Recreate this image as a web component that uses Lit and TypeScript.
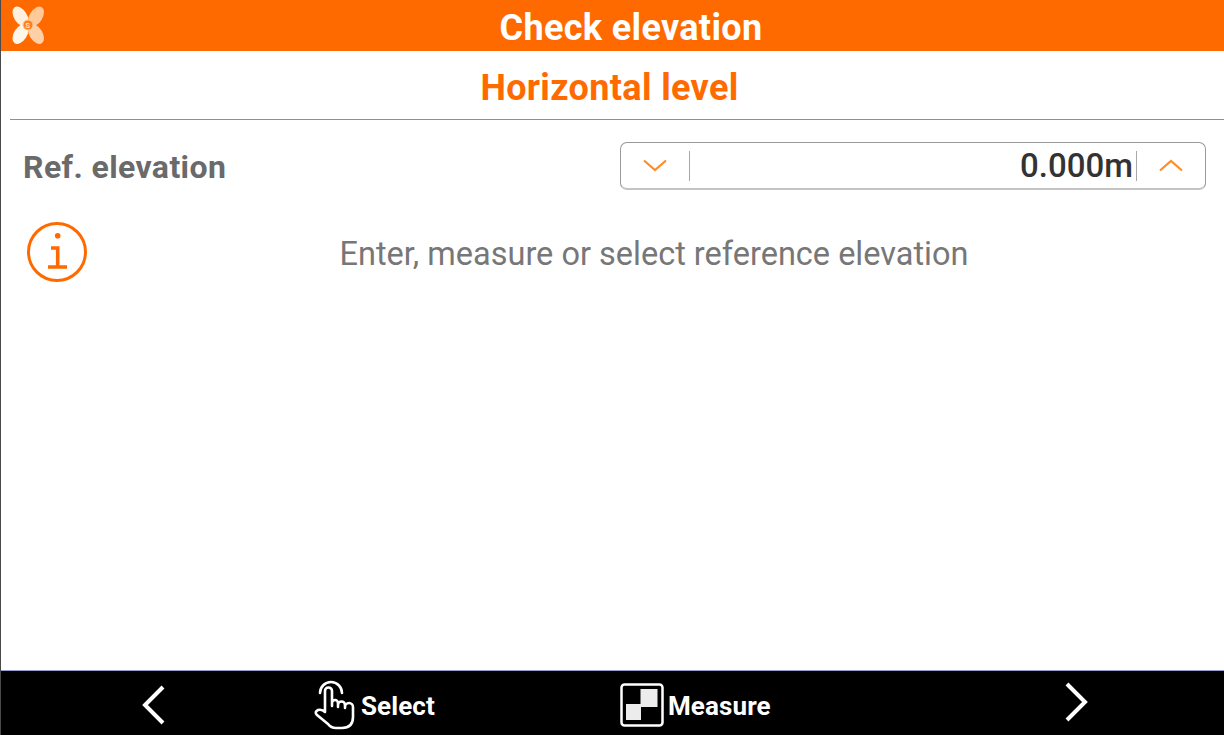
import { LitElement, html, css } from "lit";
import { customElement } from "lit/decorators.js";

@customElement("app-root")
export class AppRoot extends LitElement {
  static styles = css`
    :host { display: block; width: 1224px; height: 735px; font-family: Roboto, "Liberation Sans", sans-serif; overflow: hidden; }
    .page { height: 735px; display: flex; flex-direction: column; background: #fff; border-left: 1px solid #4a4a4a; box-sizing: border-box; }
    .top { height: 51px; flex: none; background: #ff6a00; display: flex; align-items: center; justify-content: center; position: relative; color: #fff; font-size: 36px; font-weight: 700; letter-spacing: 0.35px; }
    .top span { padding: 5px 0 0 37px; }
    .logo { position: absolute; left: 8px; top: 6px; width: 36px; height: 38px; }
    .logo text { font-family: Roboto, sans-serif; font-size: 8px; font-weight: 700; fill: #ffe0c0; text-anchor: middle; }
    .sub { height: 69px; flex: none; margin: 0 0 0 9px; padding: 5px 15px 0 0; display: flex; align-items: center; justify-content: center; color: #ff6a00; font-size: 36px; font-weight: 700; letter-spacing: 0.35px; border-bottom: 1px solid #e8772a; box-sizing: border-box; }
    .row { display: flex; align-items: center; justify-content: space-between; height: 48px; margin-top: 22px; padding: 0 18px 0 22px; }
    .label { font-size: 32px; font-weight: 700; color: #6a6a6a; letter-spacing: 0.4px; padding-top: 2px; }
    .field { width: 586px; height: 48px; box-sizing: border-box; border: 1px solid #999; border-bottom: 2px solid #c4c4c4; border-radius: 7px; display: flex; align-items: center; }
    .chev { width: 68px; flex: none; display: flex; justify-content: center; }
    .sep { width: 1px; height: 30px; background: #a8a8a8; flex: none; }
    .val { flex: 1; text-align: right; font-size: 33px; font-weight: 500; color: #333; line-height: 1; padding-right: 3px; }
    .info { display: flex; align-items: center; height: 66px; margin-top: 29px; padding-left: 25px; }
    .msg { flex: 1; text-align: center; font-size: 32.5px; color: #777; padding: 4px 4px 0 0; }
    .spacer { flex: 1; }
    .bottom { height: 60px; padding-top: 4px; flex: none; background: #000; border-top: 1px solid #9a9ad0; color: #fff; font-size: 26px; font-weight: 700; letter-spacing: 0.1px; display: grid; grid-template-columns: 313px 306px 1fr 160px; align-items: center; }
    .btn { display: flex; align-items: center; gap: 1px; }
    .btn span { padding-top: 2px; }
    .btn.m { gap: 4px; }
    .c { display: flex; justify-content: flex-end; padding-right: 148px; }
  `;
  render() {
    return html`<div class="page">
      <div class="top">
        <svg class="logo" viewBox="0 0 36 38">
          <ellipse cx="11.5" cy="10.5" rx="6.5" ry="11" transform="rotate(-32 11.5 10.5)" fill="#fff0de" />
          <ellipse cx="27" cy="10.5" rx="6.5" ry="11" transform="rotate(32 27 10.5)" fill="#ffc998" />
          <ellipse cx="11.5" cy="28" rx="6.5" ry="11" transform="rotate(32 11.5 28)" fill="#fff5e8" />
          <ellipse cx="27" cy="28" rx="6.5" ry="11" transform="rotate(-32 27 28)" fill="#ffd0a8" />
          <circle cx="19" cy="19" r="5" fill="#ff7d1a" stroke="#ffc998" />
          <text x="19" y="22">S</text>
        </svg>
        <span>Check elevation</span>
      </div>
      <div class="sub"><span>Horizontal level</span></div>
      <div class="row">
        <div class="label">Ref. elevation</div>
        <div class="field">
          <div class="chev"><svg width="24" height="13" viewBox="0 0 24 13"><path d="M1 1.5 L12 11 L23 1.5" fill="none" stroke="#ff8c26" stroke-width="2.2"/></svg></div>
          <div class="sep"></div>
          <div class="val">0.000m</div>
          <div class="sep"></div>
          <div class="chev"><svg width="24" height="13" viewBox="0 0 24 13"><path d="M1 11.5 L12 2 L23 11.5" fill="none" stroke="#ff8c26" stroke-width="2.2"/></svg></div>
        </div>
      </div>
      <div class="info">
        <svg width="62" height="62" viewBox="0 0 62 62">
          <circle cx="31" cy="31" r="28.5" fill="none" stroke="#ff6a00" stroke-width="3" />
          <circle cx="31.7" cy="14.7" r="2.8" fill="#ff6a00" />
          <path d="M25 27 H31.7 V46 M22 46 H41" fill="none" stroke="#ff6a00" stroke-width="3.6" />
        </svg>
        <div class="msg">Enter, measure or select reference elevation</div>
      </div>
      <div class="spacer"></div>
      <div class="bottom">
        <div class="c"><svg width="24" height="40" viewBox="0 0 24 40"><path d="M21 2 L3 20 L21 38" fill="none" stroke="#fff" stroke-width="4"/></svg></div>
        <div class="btn">
          <svg width="46" height="52" viewBox="0 0 46 52" fill="none" stroke="#fff" stroke-width="2.6" stroke-linejoin="round" stroke-linecap="round">
            <path d="M6 14 A11 11 0 1 1 28 14" />
            <path d="M11 33 V12 A3.5 3.5 0 0 1 18 12 V27 M18 27 V24 A3 3 0 0 1 24 24 V28 M24 26 A3 3 0 0 1 31 26 V29 M31 28 A3 3 0 0 1 39 28 V38 Q39 49 28 49 H22 Q17 49 14 45 L3 36 Q0 33 4 31 Q8 30 11 33" />
          </svg>
          <span>Select</span>
        </div>
        <div class="btn m">
          <svg width="44" height="44" viewBox="0 0 44 44">
            <rect x="1.5" y="1.5" width="41" height="41" rx="3" fill="none" stroke="#fff" stroke-width="2.5"/>
            <rect x="20.5" y="6" width="17" height="18" fill="#ececec"/>
            <rect x="6" y="21" width="15" height="16" fill="#ececec"/>
          </svg>
          <span>Measure</span>
        </div>
        <div><svg width="24" height="40" viewBox="0 0 24 40"><path d="M3 2 L21 20 L3 38" fill="none" stroke="#fff" stroke-width="4"/></svg></div>
      </div>
    </div>`;
  }
}
